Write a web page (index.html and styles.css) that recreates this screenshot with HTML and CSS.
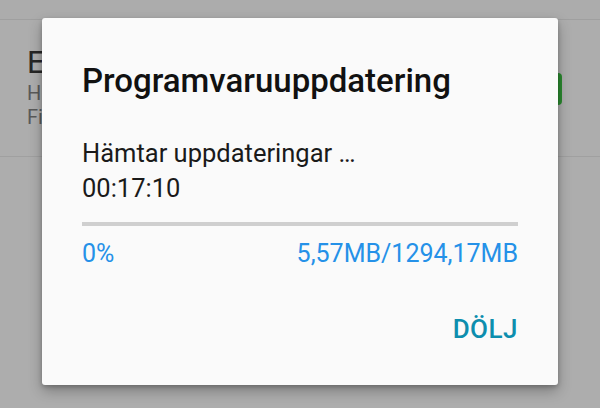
FILE: index.html
```html
<!DOCTYPE html>
<html>
<head>
<meta charset="utf-8">
<link rel="stylesheet" href="styles.css">
</head>
<body>
<div class="page">
  <div class="appbar"></div>
  <div class="item">
    <div class="item-text">
      <div class="item-title">E</div>
      <div class="item-sub">H</div>
      <div class="item-sub">Fi</div>
    </div>
    <div class="item-btn"></div>
  </div>
</div>
<div class="dialog">
  <div class="title">Programvaruuppdatering</div>
  <div class="msg">
    <div>Hämtar uppdateringar …</div>
    <div>00:17:10</div>
  </div>
  <div class="bar"></div>
  <div class="stats">
    <span>0%</span>
    <span>5,57MB/1294,17MB</span>
  </div>
  <div class="actions">
    <span class="btn">DÖLJ</span>
  </div>
</div>
</body>
</html>
```
FILE: styles.css
```css
html, body {
  margin: 0;
  padding: 0;
}
body {
  width: 600px;
  height: 408px;
  overflow: hidden;
  background: #adadad;
  font-family: Roboto, "Noto Sans", sans-serif;
  position: relative;
}
.page {
  display: flex;
  flex-direction: column;
}
.appbar {
  height: 19px;
  background: #acacac;
  border-bottom: 1px solid #9f9f9f;
}
.item {
  height: 136px;
  border-bottom: 1px solid #a0a0a0;
  display: flex;
  justify-content: space-between;
  align-items: flex-start;
  padding-left: 27px;
}
.item-text {
  padding-top: 25px;
  white-space: nowrap;
}
.item-title {
  font-size: 31px;
  line-height: 36px;
  color: #262626;
}
.item-sub {
  font-size: 20px;
  line-height: 24px;
  color: #5a5a5a;
}
.item-btn {
  margin-top: 53px;
  margin-right: 38px;
  width: 60px;
  height: 32px;
  border-radius: 4px;
  background: #2b8a2f;
}
.dialog {
  position: absolute;
  left: 42px;
  top: 18px;
  width: 516px;
  height: 367px;
  box-sizing: border-box;
  background: #fafafa;
  border-radius: 3px;
  box-shadow: 0 6px 14px rgba(0,0,0,0.28), 0 2px 4px rgba(0,0,0,0.2);
  padding: 43px 40px 0 40px;
}
.title {
  font-size: 33px;
  font-weight: 500;
  line-height: 40px;
  color: #111;
}
.msg {
  margin-top: 35px;
  font-size: 25.5px;
  line-height: 35px;
  color: #1a1a1a;
}
.bar {
  margin-top: 16px;
  height: 4px;
  background: #cfcfcf;
}
.stats {
  margin-top: 13px;
  display: flex;
  justify-content: space-between;
  font-size: 25px;
  line-height: 30px;
  color: #2591e8;
}
.actions {
  margin-top: 45px;
  display: flex;
  justify-content: flex-end;
}
.btn {
  font-size: 26px;
  font-weight: 500;
  letter-spacing: 0.5px;
  line-height: 30px;
  color: #0d8eae;
}
```
